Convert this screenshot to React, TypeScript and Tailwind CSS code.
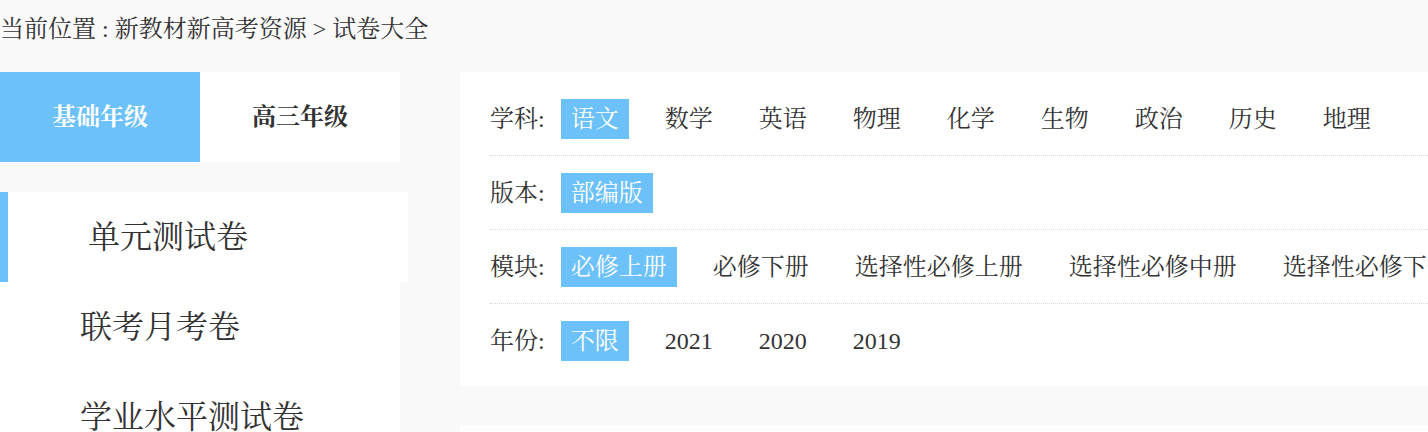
import React from 'react';

const FONT = '"Liberation Serif", "Noto Serif CJK SC", "Noto Sans CJK SC", serif';

interface FilterRowProps {
  label: string;
  items: string[];
  active: number;
  last?: boolean;
}

const FilterRow: React.FC<FilterRowProps> = ({ label, items, active, last }) => (
  <div
    className={`flex items-center h-[74px] whitespace-nowrap ${last ? '' : 'border-b border-dotted border-[#d9d9d9]'}`}
  >
    <span className="text-[24px] text-[#333] mr-[16px]">{label}</span>
    <div className="flex items-center gap-[26px]">
      {items.map((item, i) => (
        <span
          key={item}
          className={`h-[40px] leading-[40px] px-[10px] text-[24px] ${
            i === active ? 'bg-[#6cc1f8] text-white' : 'text-[#333]'
          }`}
        >
          {item}
        </span>
      ))}
    </div>
  </div>
);

const menu = ['单元测试卷', '联考月考卷', '学业水平测试卷'];

export default function App() {
  return (
    <div className="w-[1428px] h-[432px] overflow-hidden bg-[#f9f9f9]" style={{ fontFamily: FONT }}>
      <div className="h-[72px] leading-[58px] text-[24px] text-[#333] whitespace-nowrap">
        当前位置 : 新教材新高考资源 &gt; 试卷大全
      </div>

      <div className="flex gap-[60px]">
        {/* left column */}
        <div className="w-[400px] shrink-0">
          <div className="flex h-[90px]">
            <div className="w-[200px] flex items-center justify-center bg-[#6cc1f8] text-white text-[24px] font-bold">
              基础年级
            </div>
            <div className="w-[200px] flex items-center justify-center bg-white text-[#333] text-[24px] font-bold">
              高三年级
            </div>
          </div>

          <div className="mt-[30px]">
            {menu.map((m, i) =>
              i === 0 ? (
                <div
                  key={m}
                  className="w-[408px] h-[90px] flex items-center bg-white border-l-[8px] border-[#6cc1f8] pl-[80px] text-[32px] text-[#333]"
                >
                  {m}
                </div>
              ) : (
                <div key={m} className="h-[90px] flex items-center bg-white pl-[80px] text-[32px] text-[#333]">
                  {m}
                </div>
              )
            )}
          </div>
        </div>

        {/* right column */}
        <div className="w-[1100px] shrink-0">
          <div className="bg-white pl-[30px] pt-[10px] pb-[8px]">
            <FilterRow
              label="学科:"
              items={['语文', '数学', '英语', '物理', '化学', '生物', '政治', '历史', '地理']}
              active={0}
            />
            <FilterRow label="版本:" items={['部编版']} active={0} />
            <FilterRow
              label="模块:"
              items={['必修上册', '必修下册', '选择性必修上册', '选择性必修中册', '选择性必修下册']}
              active={0}
            />
            <FilterRow label="年份:" items={['不限', '2021', '2020', '2019']} active={0} last />
          </div>
          <div className="mt-[40px] h-[200px] bg-white" />
        </div>
      </div>
    </div>
  );
}
